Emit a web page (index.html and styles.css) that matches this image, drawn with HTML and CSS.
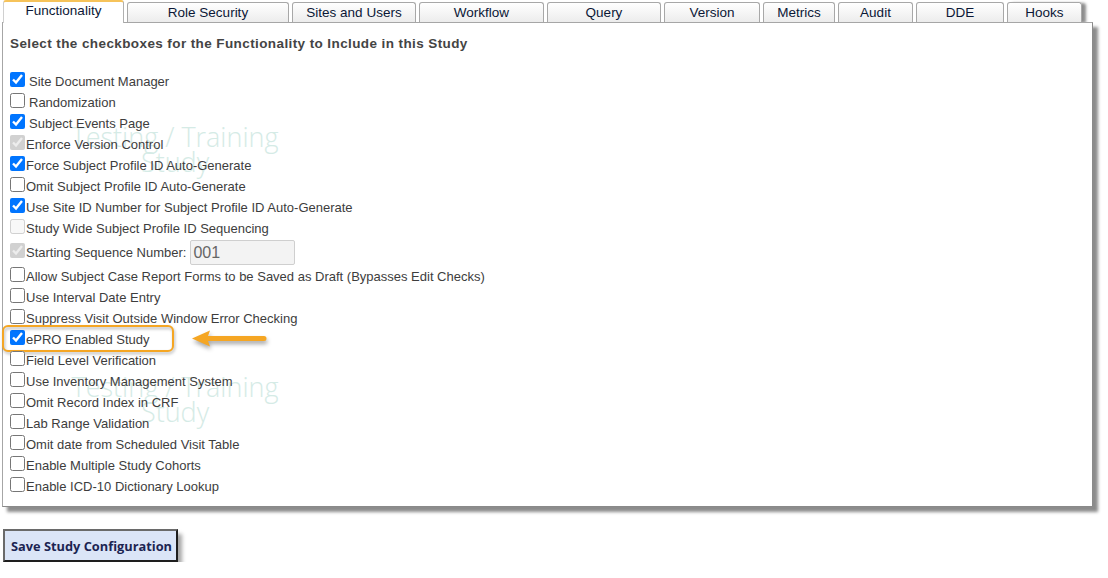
FILE: index.html
```html
<!DOCTYPE html>
<html>
<head>
<meta charset="utf-8">
<link rel="stylesheet" href="styles.css">
</head>
<body>
<div class="page">
  <div class="tabs">
    <div class="tab active t-func">Functionality</div>
    <div class="tab t-role">Role Security</div>
    <div class="tab t-sites">Sites and Users</div>
    <div class="tab t-flow">Workflow</div>
    <div class="tab t-query">Query</div>
    <div class="tab t-ver">Version</div>
    <div class="tab t-met">Metrics</div>
    <div class="tab t-aud">Audit</div>
    <div class="tab t-dde">DDE</div>
    <div class="tab t-hooks">Hooks</div>
  </div>
  <div class="panel">
    <div class="watermark wm1">Testing / Training<br>Study</div>
    <div class="watermark wm2">Testing / Training<br>Study</div>
    <h1 class="title">Select the checkboxes for the Functionality to Include in this Study</h1>
    <ul class="opts">
      <li class="opt spaced"><input type="checkbox" checked><span>Site Document Manager</span></li>
      <li class="opt spaced"><input type="checkbox"><span>Randomization</span></li>
      <li class="opt spaced"><input type="checkbox" checked><span>Subject Events Page</span></li>
      <li class="opt"><input type="checkbox" checked disabled><span>Enforce Version Control</span></li>
      <li class="opt"><input type="checkbox" checked><span>Force Subject Profile ID Auto-Generate</span></li>
      <li class="opt"><input type="checkbox"><span>Omit Subject Profile ID Auto-Generate</span></li>
      <li class="opt"><input type="checkbox" checked><span>Use Site ID Number for Subject Profile ID Auto-Generate</span></li>
      <li class="opt"><input type="checkbox" disabled><span>Study Wide Subject Profile ID Sequencing</span></li>
      <li class="opt tall"><input type="checkbox" checked disabled><span>Starting Sequence Number:</span><input class="seq" type="text" value="001" disabled></li>
      <li class="opt"><input type="checkbox"><span>Allow Subject Case Report Forms to be Saved as Draft (Bypasses Edit Checks)</span></li>
      <li class="opt"><input type="checkbox"><span>Use Interval Date Entry</span></li>
      <li class="opt"><input type="checkbox"><span>Suppress Visit Outside Window Error Checking</span></li>
      <li class="opt marked"><input type="checkbox" checked><span>ePRO Enabled Study</span>
        <div class="highlight"></div>
        <svg class="arrow" width="82" height="22" viewBox="0 0 82 22">
          <path d="M2 10.5 L20 2.5 L18 8 L74 8 A2.5 2.5 0 0 1 74 13 L18 13 L20 18.5 Z" fill="#f5a623"/>
        </svg>
      </li>
      <li class="opt"><input type="checkbox"><span>Field Level Verification</span></li>
      <li class="opt"><input type="checkbox"><span>Use Inventory Management System</span></li>
      <li class="opt"><input type="checkbox"><span>Omit Record Index in CRF</span></li>
      <li class="opt"><input type="checkbox"><span>Lab Range Validation</span></li>
      <li class="opt"><input type="checkbox"><span>Omit date from Scheduled Visit Table</span></li>
      <li class="opt"><input type="checkbox"><span>Enable Multiple Study Cohorts</span></li>
      <li class="opt"><input type="checkbox"><span>Enable ICD-10 Dictionary Lookup</span></li>
    </ul>
  </div>
  <button class="save">Save Study Configuration</button>
</div>
</body>
</html>
```
FILE: styles.css
```css
body {
  margin: 0;
  background: #ffffff;
  font-family: "Liberation Sans", Arial, sans-serif;
}

.page {
  padding-left: 2px;
}

.tabs {
  display: flex;
  align-items: flex-end;
  height: 22px;
  padding-left: 1px;
  gap: 3px;
}

.tab {
  box-sizing: border-box;
  height: 20px;
  border: 1px solid #a8a8a8;
  border-bottom: none;
  border-radius: 3px 3px 0 0;
  background: linear-gradient(#ffffff, #ececec);
  color: #0b1736;
  font-size: 13.5px;
  line-height: 20px;
  text-align: center;
}

.tab.active {
  height: 23px;
  margin-bottom: -1px;
  position: relative;
  z-index: 2;
  background: #ffffff;
  border-top: 2px solid #f6c35a;
  border-color: #f6c35a #b0b0b0 #b0b0b0 #d0d0d0;
  line-height: 17px;
}

.t-func { width: 121px; }
.t-role { width: 162px; }
.t-sites { width: 124px; }
.t-flow { width: 125px; }
.t-query { width: 114px; }
.t-ver { width: 96px; }
.t-met { width: 72px; }
.t-aud { width: 75px; }
.t-dde { width: 88px; }
.t-hooks { width: 75px; box-shadow: 4px 1px 3px rgba(0, 0, 0, 0.45); }

.panel {
  position: relative;
  box-sizing: border-box;
  width: 1091px;
  height: 485px;
  border: 1px solid #a6a6a6;
  border-right-color: #8a8a8a;
  border-bottom-color: #8a8a8a;
  background: #ffffff;
  box-shadow: 5px 5px 3px rgba(0, 0, 0, 0.45);
  padding: 13px 8px 0 7px;
}

.watermark {
  position: absolute;
  left: 66px;
  width: 212px;
  text-align: center;
  font-family: "Open Sans", sans-serif;
  font-weight: 300;
  font-size: 27px;
  line-height: 25px;
  color: #d5ebe6;
  pointer-events: none;
}

.wm1 { top: 101px; }
.wm2 { top: 351px; }

.title {
  position: relative;
  margin: 0;
  font-size: 13.5px;
  line-height: 16px;
  font-weight: bold;
  color: #444444;
  letter-spacing: 0.4px;
}

.opts {
  position: relative;
  list-style: none;
  margin: 19px 0 0 0;
  padding: 0;
}

.opt {
  position: relative;
  display: flex;
  align-items: center;
  height: 21px;
  font-size: 13px;
  color: #3d3d3d;
}

.opt input[type="checkbox"] {
  width: 15px;
  height: 15px;
  margin: -4px 1px 0 0;
}

.opt.spaced input[type="checkbox"] {
  margin-right: 4px;
}

.opt.tall {
  height: 27px;
}

.seq {
  box-sizing: border-box;
  width: 105px;
  height: 25px;
  margin: 0 0 0 4px;
  padding: 0 2px;
  border: 1px solid #cfcfcf;
  border-radius: 2px;
  background: #f3f3f3;
  color: #666666;
  font-family: "Liberation Sans", Arial, sans-serif;
  font-size: 16px;
}

.highlight {
  position: absolute;
  left: -8px;
  top: -4px;
  width: 172px;
  height: 27px;
  box-sizing: border-box;
  border: 2.5px solid #f5a623;
  border-radius: 6px;
  filter: drop-shadow(1px 2px 1.5px rgba(0, 0, 0, 0.3));
  pointer-events: none;
}

.arrow {
  position: absolute;
  left: 180px;
  top: -1px;
  filter: drop-shadow(1px 3px 2px rgba(0, 0, 0, 0.35));
}

.save {
  display: block;
  margin: 22px 0 0 1px;
  width: 175px;
  height: 33px;
  box-sizing: border-box;
  border: 2px solid;
  border-color: #6a6a6a #1e1e1e #1e1e1e #6a6a6a;
  background: #dbe5f7;
  color: #1c2452;
  font-family: "Open Sans", sans-serif;
  font-weight: bold;
  font-size: 12.8px;
  text-align: left;
  padding: 0 0 0 6px;
  box-shadow: 4px 5px 4px rgba(0, 0, 0, 0.35);
}
```
